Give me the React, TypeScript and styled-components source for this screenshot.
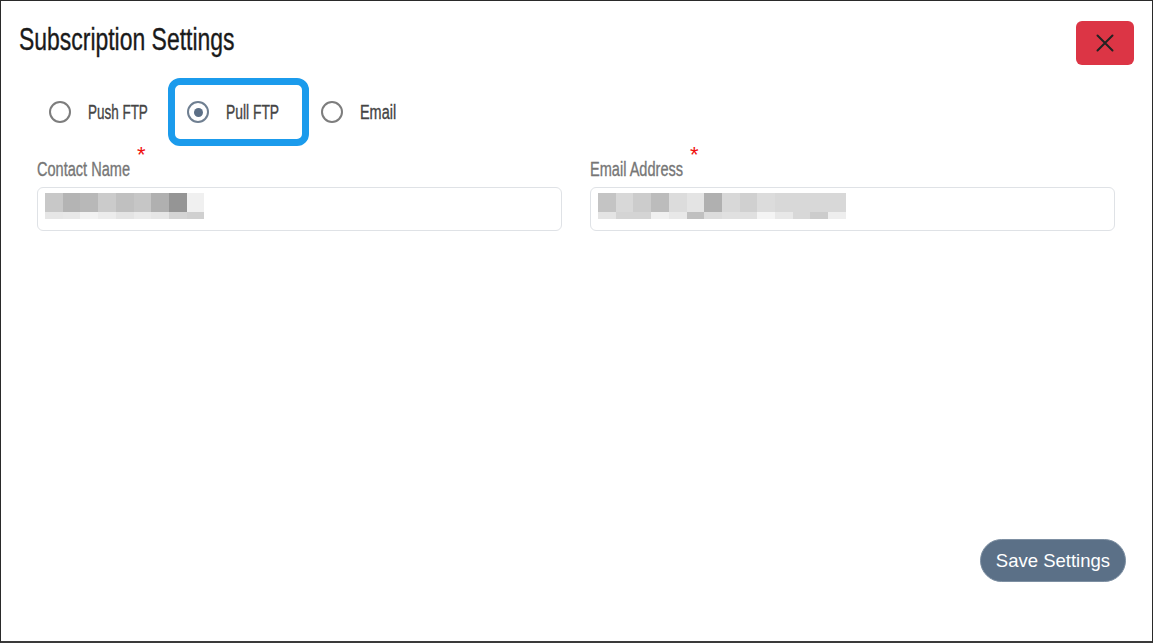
import React from "react";
import styled, { createGlobalStyle } from "styled-components";

const Global = createGlobalStyle`
  html, body { margin: 0; padding: 0; background: #fff; }
  #root { width: 1153px; height: 643px; }
  * { box-sizing: border-box; }
`;

const sans = `"Liberation Sans", Arial, sans-serif`;

const Frame = styled.div`
  width: 1153px;
  height: 643px;
  border: 1px solid #2a2a2a;
  border-bottom: 2px solid #3a3a3a;
  background: #fff;
  display: flex;
  flex-direction: column;
`;

/* Condensed text: a box of the given width holding text squeezed horizontally */
const Condensed = styled.span<{ $w: number; $sx: number }>`
  display: inline-block;
  width: ${(p) => p.$w}px;
  white-space: nowrap;
  flex-shrink: 0;
  & > span {
    display: inline-block;
    transform: scaleX(${(p) => p.$sx});
    transform-origin: left center;
    -webkit-text-stroke: 0.35px currentColor;
  }
`;

const CText: React.FC<{ w: number; sx: number; children: React.ReactNode }> = ({ w, sx, children }) => (
  <Condensed $w={w} $sx={sx}>
    <span>{children}</span>
  </Condensed>
);

const Header = styled.div`
  display: flex;
  justify-content: space-between;
  align-items: flex-start;
  padding: 20px 18px 0 18px;
`;

const Title = styled.h1`
  margin: 0;
  padding-top: 1px;
  font-family: ${sans};
  font-weight: 400;
  font-size: 31px;
  line-height: 36px;
  color: #1a1a1a;
`;

const CloseButton = styled.button`
  width: 58px;
  height: 44px;
  border: none;
  border-radius: 6px;
  background: #dc3545;
  display: flex;
  align-items: center;
  justify-content: center;
  padding: 0;
  cursor: pointer;
`;

const RadioRow = styled.div`
  display: flex;
  align-items: center;
  margin-top: 13px;
  padding-left: 48px;
  height: 68px;
`;

const Option = styled.label<{ $highlight?: boolean; $space?: number }>`
  display: flex;
  align-items: center;
  gap: 17px;
  height: 68px;
  border-radius: 12px;
  border: ${(p) => (p.$highlight ? "7px solid #1b9bec" : "none")};
  padding: ${(p) => (p.$highlight ? "0 20px 0 12px" : "0")};
  margin-left: ${(p) => p.$space ?? 0}px;
  font-family: ${sans};
  font-size: 19.5px;
  line-height: 20px;
  color: #444;
  cursor: pointer;
`;

const Circle = styled.span<{ $checked?: boolean }>`
  width: 22px;
  height: 22px;
  border-radius: 50%;
  border: 2px solid ${(p) => (p.$checked ? "#6f7f91" : "#7d7d7d")};
  display: flex;
  align-items: center;
  justify-content: center;
  flex-shrink: 0;
  &::after {
    content: "";
    width: 9px;
    height: 9px;
    border-radius: 50%;
    background: #5c6f86;
    display: ${(p) => (p.$checked ? "block" : "none")};
  }
`;

const Fields = styled.div`
  display: grid;
  grid-template-columns: 525px 525px;
  column-gap: 28px;
  padding: 0 36px;
  margin-top: 12px;
`;

const Field = styled.div`
  display: flex;
  flex-direction: column;
`;

const Label = styled.div`
  display: flex;
  align-items: baseline;
  font-family: ${sans};
  font-size: 20.5px;
  line-height: 22px;
  color: #767676;
  height: 22px;
`;

const Required = styled.span`
  color: #f01010;
  font-family: ${sans};
  font-size: 22px;
  line-height: 22px;
  position: relative;
  top: -14px;
  margin-left: 6px;
`;

const InputBox = styled.div`
  margin-top: 7px;
  height: 44px;
  border: 1px solid #dfe2e6;
  border-radius: 6px;
  padding: 5px 7px;
  display: flex;
  align-items: flex-start;
`;

const Footer = styled.div`
  margin-top: auto;
  display: flex;
  justify-content: flex-end;
  padding: 0 26px 59px 0;
`;

const SaveButton = styled.button`
  height: 43px;
  padding: 0 15px;
  border-radius: 22px;
  border: 1px solid #7d8fa2;
  background: #5b7087;
  color: #fff;
  font-family: ${sans};
  font-size: 18.5px;
  cursor: pointer;
`;

const BlurredText: React.FC<{ top: string[]; bottom: string[] }> = ({ top, bottom }) => {
  const w = 17.7;
  return (
    <svg width={top.length * w} height={26} shapeRendering="crispEdges">
      {top.map((c, i) => (
        <rect key={"t" + i} x={i * w} y={0} width={w + 0.5} height={19} fill={c} />
      ))}
      {bottom.map((c, i) => (
        <rect key={"b" + i} x={i * w} y={19} width={w + 0.5} height={7} fill={c} />
      ))}
    </svg>
  );
};

const XIcon = () => (
  <svg width="18" height="18" viewBox="0 0 18 18">
    <path d="M1.5 1.5 L16.5 16.5 M16.5 1.5 L1.5 16.5" stroke="#222" strokeWidth="2" strokeLinecap="round" />
  </svg>
);

const nameTop = ["#c8c8c8", "#b4b4b4", "#b8b8b8", "#cbcbcb", "#c0c0c0", "#c6c6c6", "#b0b0b0", "#959595", "#f0f0f0"];
const nameBottom = ["#e6e6e6", "#e8e8e8", "#f2f2f2", "#ececec", "#e4e4e4", "#eaeaea", "#e6e6e6", "#d4d4d4", "#d0d0d0"];
const mailTop = ["#c4c4c4", "#d8d8d8", "#cccccc", "#bcbcbc", "#dcdcdc", "#e4e4e4", "#b0b0b0", "#d8d8d8", "#d0d0d0", "#dcdcdc", "#d8d8d8", "#d8d8d8", "#d8d8d8", "#d8d8d8"];
const mailBottom = ["#e4e4e4", "#d4d4d4", "#d4d4d4", "#f0f0f0", "#e8e8e8", "#c0c0c0", "#dcdcdc", "#e0e0e0", "#e0e0e0", "#f4f4f4", "#e8e8e8", "#d8d8d8", "#cccccc", "#eeeeee"];

export default function App() {
  return (
    <>
      <Global />
      <Frame>
        <Header>
          <Title>
            <CText w={216} sx={0.74}>Subscription Settings</CText>
          </Title>
          <CloseButton aria-label="Close">
            <XIcon />
          </CloseButton>
        </Header>
        <RadioRow>
          <Option>
            <Circle />
            <CText w={60} sx={0.69}>Push FTP</CText>
          </Option>
          <Option $highlight $space={20}>
            <Circle $checked />
            <CText w={56} sx={0.71}>Pull FTP</CText>
          </Option>
          <Option $space={12}>
            <Circle />
            <CText w={36} sx={0.74}>Email</CText>
          </Option>
        </RadioRow>
        <Fields>
          <Field>
            <Label>
              <CText w={94} sx={0.71}>Contact Name</CText>
              <Required>*</Required>
            </Label>
            <InputBox>
              <BlurredText top={nameTop} bottom={nameBottom} />
            </InputBox>
          </Field>
          <Field>
            <Label>
              <CText w={94} sx={0.71}>Email Address</CText>
              <Required>*</Required>
            </Label>
            <InputBox>
              <BlurredText top={mailTop} bottom={mailBottom} />
            </InputBox>
          </Field>
        </Fields>
        <Footer>
          <SaveButton>Save Settings</SaveButton>
        </Footer>
      </Frame>
    </>
  );
}
